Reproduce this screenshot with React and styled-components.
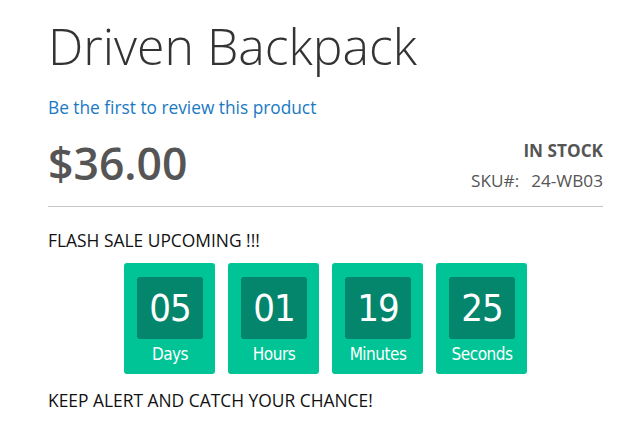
import React from "react";
import styled, { createGlobalStyle } from "styled-components";

const Global = createGlobalStyle`
  html, body { margin: 0; padding: 0; background: #fff; }
  body { font-family: "Open Sans", "Noto Sans", sans-serif; }
`;

const Page = styled.div`
  padding: 16px 24px 0 48px;
  width: 555px;
`;

const Title = styled.h1`
  margin: 0;
  font-weight: 300;
  font-size: 50px;
  line-height: 60px;
  color: #333;
`;

const ReviewLink = styled.a`
  display: block;
  margin-top: 20px;
  font-size: 17.3px;
  line-height: 24px;
  color: #1979c3;
  text-decoration: none;
`;

const InfoRow = styled.div`
  display: flex;
  justify-content: space-between;
  align-items: flex-start;
  margin-top: 18px;
  padding-bottom: 14px;
  border-bottom: 1px solid #c6c6c6;
`;

const Price = styled.div`
  font-size: 44.5px;
  font-weight: 600;
  line-height: 50px;
  color: #555;
`;

const Stock = styled.div`
  text-align: right;
  color: #555;
  font-size: 17.2px;
  padding-top: 2px;
`;

const StockStatus = styled.div`
  font-weight: 700;
  line-height: 22px;
  text-transform: uppercase;
`;

const Sku = styled.div`
  margin-top: 8px;
  line-height: 22px;
  span { margin-left: 12px; }
`;

const Note = styled.p`
  margin: ${(p) => p.$mt || 0}px 0 0;
  font-size: 17.4px;
  line-height: 22px;
  color: #111;
`;

const Timer = styled.div`
  display: flex;
  justify-content: center;
  gap: 13px;
  margin-top: 12px;
`;

const Unit = styled.div`
  width: 91px;
  height: 111px;
  box-sizing: border-box;
  background: #00c495;
  border-radius: 3px;
  padding: 14px 12px 0 13px;
  display: flex;
  flex-direction: column;
  align-items: center;
  font-family: "DejaVu Sans", Verdana, sans-serif;
  color: #fff;
`;

const Digits = styled.div`
  width: 66px;
  height: 62px;
  flex: none;
  background: #03866c;
  border-radius: 3px;
  display: flex;
  align-items: center;
  justify-content: center;
  font-size: 38px;
  font-stretch: condensed;
  letter-spacing: -1px;
`;

const Label = styled.div`
  margin-top: 5px;
  font-size: 17px;
  line-height: 20px;
  font-stretch: condensed;
  letter-spacing: -0.5px;
  white-space: nowrap;
`;

const units = [
  ["05", "Days"],
  ["01", "Hours"],
  ["19", "Minutes"],
  ["25", "Seconds"],
];

export default function App() {
  return (
    <>
      <Global />
      <Page>
        <Title>Driven Backpack</Title>
        <ReviewLink href="#">Be the first to review this product</ReviewLink>
        <InfoRow>
          <Price>$36.00</Price>
          <Stock>
            <StockStatus>In stock</StockStatus>
            <Sku>
              SKU#:<span>24-WB03</span>
            </Sku>
          </Stock>
        </InfoRow>
        <Note $mt={22}>FLASH SALE UPCOMING !!!</Note>
        <Timer>
          {units.map(([v, l]) => (
            <Unit key={l}>
              <Digits>{v}</Digits>
              <Label>{l}</Label>
            </Unit>
          ))}
        </Timer>
        <Note $mt={15}>KEEP ALERT AND CATCH YOUR CHANCE!</Note>
      </Page>
    </>
  );
}
